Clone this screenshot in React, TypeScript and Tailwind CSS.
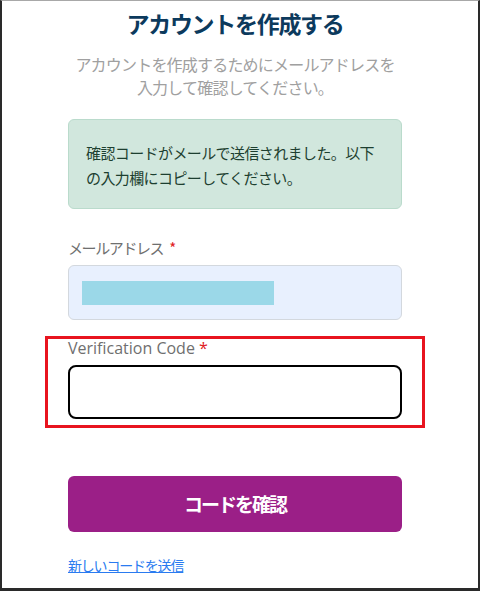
import React from 'react';

const jp = { fontFamily: '"Noto Sans CJK JP", "Noto Sans", sans-serif' };

export default function App() {
  return (
    <div
      className="w-[480px] h-[591px] bg-white border-t border-t-[#a8a8a8] border-l-2 border-r-2 border-b-[3px] border-l-[#2a2a2a] border-r-[#2a2a2a] border-b-[#2a2a2a] box-border overflow-hidden"
      style={jp}
    >
      <div className="relative w-[334px] ml-[66px] pt-[6px] flex flex-col">
        {/* heading */}
        <h1 className="text-center text-[23px] leading-[32px] font-bold text-[#0c3a5d] tracking-[-1.3px]">
          アカウントを作成する
        </h1>
        <p className="mt-[14px] text-center text-[16px] leading-[23px] text-[#a0a0a0] tracking-[-0.8px]">
          アカウントを作成するためにメールアドレスを
          <br />
          入力して確認してください。
        </p>

        {/* alert */}
        <div className="mt-[20px] h-[90px] rounded-[6px] border border-[#badbcc] bg-[#d1e7dd] pl-[17px] pr-3 pt-[20px] text-[15px] leading-[25px] text-[#1d3f30] tracking-[-0.6px]">
          確認コードがメールで送信されました。以下
          <br />
          の入力欄にコピーしてください。
        </div>

        {/* email */}
        <label className="mt-[27px] text-[15px] leading-[24px] text-[#6f6f6f] tracking-[-1.4px]">
          メールアドレス<span className="ml-[6px] text-[#e0201c]">*</span>
        </label>
        <div className="mt-[5px] h-[55px] rounded-[6px] border border-[#d3d8de] bg-[#e8f0fe] flex items-center pl-[13px]">
          <div className="w-[192px] h-[24px] bg-[#9bd8e8]" />
        </div>

        {/* verification code */}
        <label
          className="mt-[16px] text-[16px] leading-[24px] text-[#6f6f6f]"
          style={{ fontFamily: '"Open Sans", "Noto Sans", sans-serif' }}
        >
          Verification Code <span className="text-[#e0201c]">*</span>
        </label>
        <input
          type="text"
          className="mt-[5px] h-[54px] w-full rounded-[8px] border-2 border-black bg-white outline-none"
        />

        {/* annotation box */}
        <div className="absolute left-[-23px] top-[335px] w-[380px] h-[92px] border-[3px] border-[#e8141f] pointer-events-none" />

        <button className="mt-[57px] h-[56px] w-full rounded-[6px] bg-[#9b1f87] text-white text-[19px] font-bold tracking-[-2px]">
          コードを確認
        </button>

        <a
          href="#"
          className="mt-[22px] self-start text-[14px] leading-[22px] text-[#2a7bf0] underline tracking-[-1.2px]"
        >
          新しいコードを送信
        </a>
      </div>
    </div>
  );
}
